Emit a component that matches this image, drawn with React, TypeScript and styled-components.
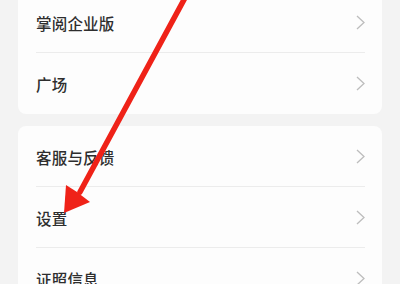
import React from "react";
import styled, { createGlobalStyle } from "styled-components";

const GlobalStyle = createGlobalStyle`
  html, body { margin: 0; padding: 0; background: #f3f3f3; }
  body { font-family: "Noto Sans CJK SC", "Noto Sans", sans-serif; }
  #root { width: 400px; height: 284px; overflow: hidden; position: relative; }
`;

const Page = styled.div`
  display: flex;
  flex-direction: column;
  gap: 12px;
  padding: 0 18px;
  margin-top: -8px;
`;

const Card = styled.div`
  background: #fdfdfd;
  border-radius: 8px;
  display: flex;
  flex-direction: column;
`;

const Row = styled.div<{ $divider?: boolean }>`
  height: 61px;
  display: flex;
  align-items: center;
  justify-content: space-between;
  padding: 0 17px 0 18px;
  position: relative;
  box-sizing: border-box;
  &::after {
    content: "";
    display: ${(p) => (p.$divider ? "block" : "none")};
    position: absolute;
    left: 18px;
    right: 17px;
    bottom: 0;
    height: 1px;
    background: #ececec;
  }
`;

const Label = styled.span`
  font-size: 15.5px;
  font-weight: 500;
  color: #2e2e2e;
  letter-spacing: 0.2px;
`;

const Chevron = styled.svg`
  width: 9px;
  height: 15px;
  display: block;
`;

const Overlay = styled.svg`
  position: absolute;
  left: 0;
  top: 0;
  width: 400px;
  height: 284px;
  pointer-events: none;
`;

const Arrow = () => (
  <Chevron viewBox="0 0 9 15">
    <polyline points="1,1 8,7.5 1,14" fill="none" stroke="#bdbdbd" strokeWidth="1.3" />
  </Chevron>
);

const Item = ({ label, divider }: { label: string; divider?: boolean }) => (
  <Row $divider={divider}>
    <Label>{label}</Label>
    <Arrow />
  </Row>
);

export default function App() {
  return (
    <>
      <GlobalStyle />
      <Page>
        <Card>
          <Item label="掌阅企业版" divider />
          <Item label="广场" />
        </Card>
        <Card>
          <Item label="客服与反馈" divider />
          <Item label="设置" divider />
          <Item label="证照信息" />
        </Card>
      </Page>
      <Overlay viewBox="0 0 400 284">
        <path d="M186 -4 L 80 192" fill="none" stroke="#ef2218" strokeWidth="5.5" strokeLinecap="round" />
        <polygon points="64,213 66,185 77,192 90,202" fill="#ef2218" />
      </Overlay>
    </>
  );
}
